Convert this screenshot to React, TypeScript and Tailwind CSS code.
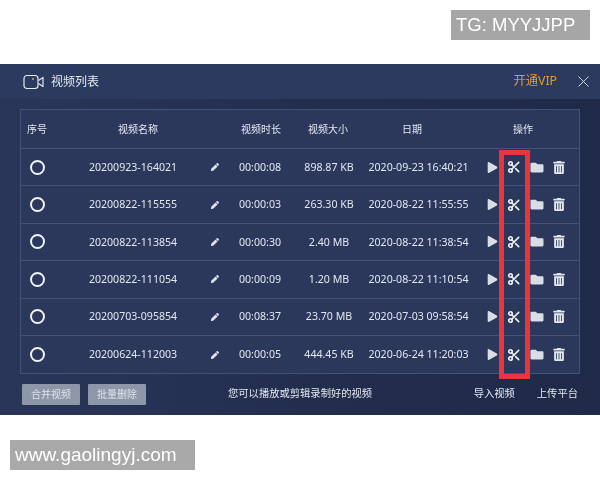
import { Scissors, X } from "lucide-react";
import { FaFolder, FaPen, FaPlay, FaTrashAlt } from "react-icons/fa";

const rows = [
  ["20200923-164021", "00:00:08", "898.87 KB", "2020-09-23 16:40:21"],
  ["20200822-115555", "00:00:03", "263.30 KB", "2020-08-22 11:55:55"],
  ["20200822-113854", "00:00:30", "2.40 MB", "2020-08-22 11:38:54"],
  ["20200822-111054", "00:00:09", "1.20 MB", "2020-08-22 11:10:54"],
  ["20200703-095854", "00:08:37", "23.70 MB", "2020-07-03 09:58:54"],
  ["20200624-112003", "00:00:05", "444.45 KB", "2020-06-24 11:20:03"],
];

function Camera() {
  return (
    <svg width="22" height="16" viewBox="0 0 22 16" fill="none" stroke="#e4e9f2" strokeWidth="1.2">
      <rect x="1" y="1.5" width="14" height="13" rx="3" />
      <path d="M15.5 6.5 L20 3.5 V12.5 L15.5 9.5" strokeLinejoin="round" />
      <circle cx="10" cy="5" r="0.9" fill="#d6b94a" stroke="none" />
    </svg>
  );
}

function Row({ r, last }: { r: string[]; last: boolean }) {
  return (
    <div className={`flex h-[37.4px] items-center text-[10.6px] text-[#e3e7ef] ${last ? "" : "border-b border-[#43507a]"}`}>
      <div className="w-[40px] pl-[9px]">
        <div className="h-[15px] w-[15px] rounded-full border-2 border-[#eef1f6]" />
      </div>
      <div className="w-[144px] pt-[1px] text-center">{r[0]}</div>
      <div className="flex w-[19px] justify-center">
        <FaPen className="h-[8px] w-[8px] text-[#dfe4ec]" />
      </div>
      <div className="ml-[1px] w-[70px] pt-[1px] text-center">{r[1]}</div>
      <div className="w-[68px] pt-[1px] text-center">{r[2]}</div>
      <div className="w-[111px] pt-[1px] text-center">{r[3]}</div>
      <div className="flex items-center pl-[13px]">
        <FaPlay className="h-[11px] w-[11px] text-[#d9dde5]" />
        <Scissors className="ml-[9px] h-[14px] w-[14px] text-[#eef1f6]" strokeWidth={2.8} />
        <FaFolder className="ml-[9px] h-[13px] w-[14px] text-[#d9dde5]" />
        <FaTrashAlt className="ml-[9px] h-[13px] w-[12px] text-[#e3e6ec]" />
      </div>
    </div>
  );
}

export default function App() {
  return (
    <div className="flex h-[480px] w-[600px] flex-col bg-white font-['Noto_Sans','Noto_Sans_CJK_SC',sans-serif] blur-[0.4px]">
      <div className="flex h-[64px] justify-end pr-[10px] pt-[10px]">
        <div className="flex h-[30px] w-[139px] items-center bg-[#a6a6a6] pl-[5px] font-['Liberation_Sans',sans-serif] text-[18.5px] text-white">
          TG: MYYJJPP
        </div>
      </div>

      <div className="relative flex h-[351px] flex-col bg-gradient-to-r from-[#2a3659] via-[#232e4f] to-[#1f2a49]">
        <div className="flex h-[35px] items-center bg-[#2b3a5e] pl-[23px] pr-[7px]">
          <Camera />
          <span className="ml-[6px] text-[12px] text-[#e3e7ef]">视频列表</span>
          <span className="ml-auto text-[12.3px] text-[#e09a33]">开通VIP</span>
          <X className="ml-[17px] h-[19px] w-[19px] text-[#d5dae4]" strokeWidth={1.2} />
        </div>

        <div className="mx-[20px] mt-[10px] border border-[#43507a] bg-[#2b385c]">
          <div className="flex h-[39px] items-center border-b border-[#43507a] text-[10px] text-[#e3e7ef]">
            <div className="w-[39px] pl-[6px]">序号</div>
            <div className="w-[156px] text-center">视频名称</div>
            <div className="w-[15px]" />
            <div className="w-[60px] text-center">视频时长</div>
            <div className="w-[74px] text-center">视频大小</div>
            <div className="w-[94px] text-center">日期</div>
            <div className="w-[24px]" />
            <div className="w-[80px] text-center">操作</div>
          </div>
          {rows.map((r, i) => (
            <Row key={r[0]} r={r} last={i === rows.length - 1} />
          ))}
        </div>

        <div className="flex flex-1 items-center pb-[1px] pl-[22px] pr-[22px] text-[10.3px]">
          <button className="h-[21px] w-[58px] rounded-[1px] bg-[#8d97a8] text-[10px] text-[#dfe3e9]">合并视频</button>
          <button className="ml-[8px] h-[21px] w-[58px] rounded-[1px] bg-[#8d97a8] text-[10px] text-[#dfe3e9]">批量删除</button>
          <span className="ml-[82px] text-[#e3e7ef]">您可以播放或剪辑录制好的视频</span>
          <span className="ml-auto text-[#e3e7ef]">导入视频</span>
          <span className="ml-[22px] text-[#e3e7ef]">上传平台</span>
        </div>

        <div className="absolute left-[499px] top-[86px] h-[229px] w-[31px] border-[5px] border-[#e8363c]" />
      </div>

      <div className="pl-[10px] pt-[25px]">
        <div className="flex h-[30px] w-[185px] items-center bg-[#a9a9a9] pl-[5px] font-['Liberation_Sans',sans-serif] text-[19px] text-white">
          www.gaolingyj.com
        </div>
      </div>
    </div>
  );
}
